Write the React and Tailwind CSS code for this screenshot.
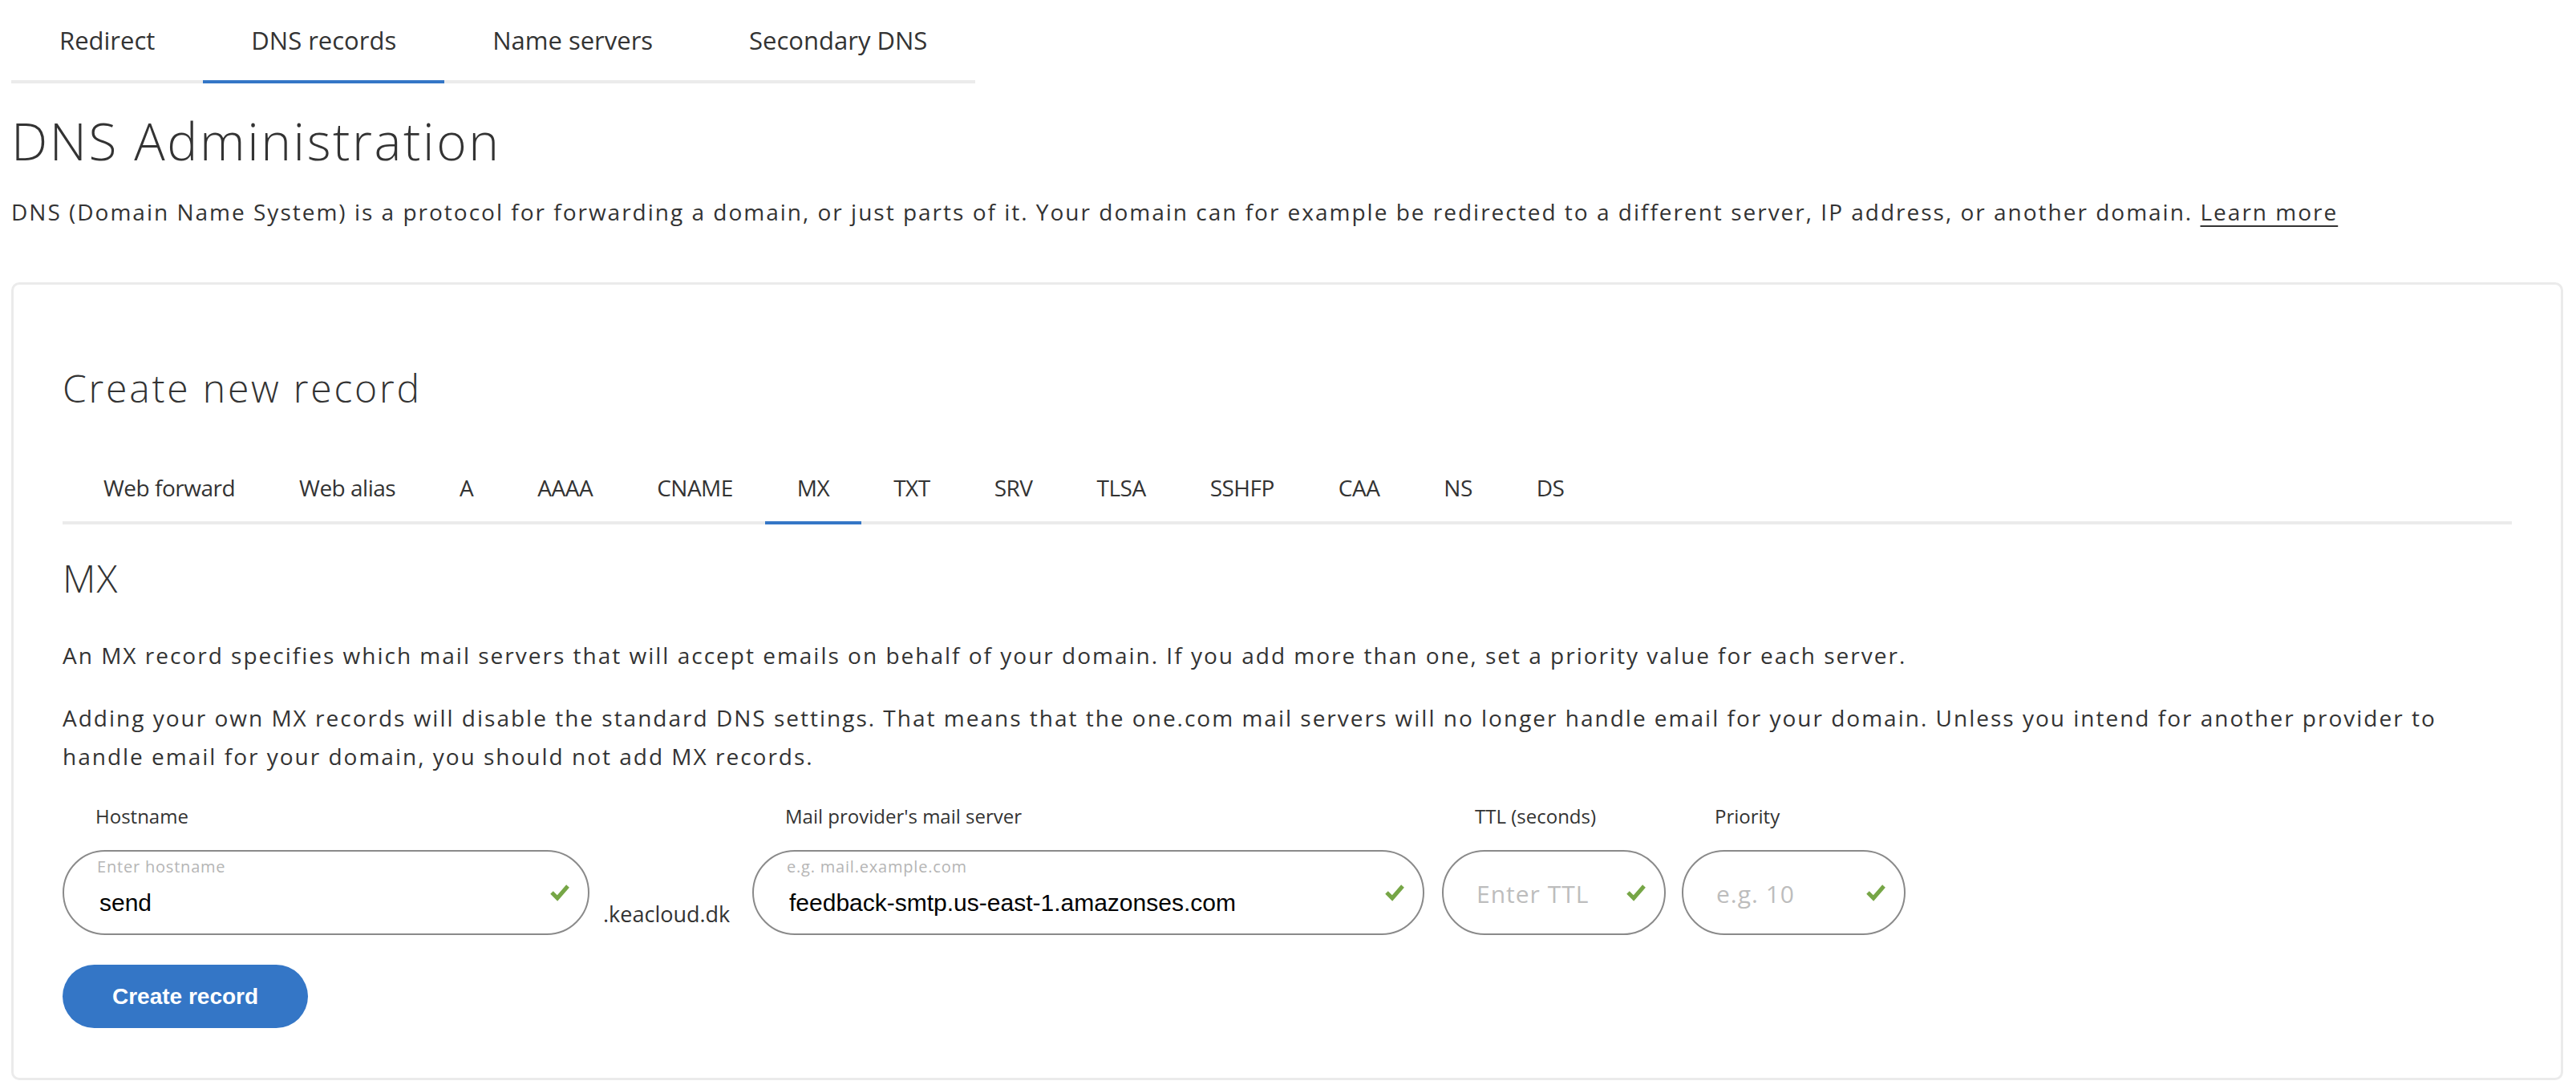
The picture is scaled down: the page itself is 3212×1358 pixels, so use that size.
import React from "react";

function Check() {
  return (
    <svg width="26" height="22" viewBox="0 0 26 22" className="shrink-0">
      <polyline points="3,11 10,18 23,3" fill="none" stroke="#76a646" strokeWidth="5" strokeLinecap="butt" strokeLinejoin="miter" />
    </svg>
  );
}

function Field({ label, width, small, value, placeholder }) {
  return (
    <div className="flex flex-col shrink-0" style={{ width }}>
      <div className="pl-[41px] text-[24px] leading-[32px] text-[#333] font-['Open_Sans',sans-serif]">{label}</div>
      <div className="mt-[26px] h-[106px] rounded-full border-2 border-[#8a8a8a] bg-white flex items-center pr-[22px]">
        {value ? (
          <div className="flex-1 flex flex-col self-stretch pt-[5px] pl-[41px]">
            <div className="text-[20px] leading-[28px] tracking-[0.8px] text-[#b5b5b5] font-['Open_Sans',sans-serif]">{small}</div>
            <div className="mt-[14px] pl-[3px] text-[30px] leading-[34px] text-black font-['Liberation_Sans',Arial,sans-serif]">{value}</div>
          </div>
        ) : (
          <div className="flex-1 pl-[41px] pt-[4px] text-[30px] leading-[40px] tracking-[1px] text-[#bdbdbd] font-['Open_Sans',sans-serif]">{placeholder}</div>
        )}
        <Check />
      </div>
    </div>
  );
}

export default function App() {
  const topTabs = ["Redirect", "DNS records", "Name servers", "Secondary DNS"];
  const subTabs = ["Web forward", "Web alias", "A", "AAAA", "CNAME", "MX", "TXT", "SRV", "TLSA", "SSHFP", "CAA", "NS", "DS"];
  return (
    <div className="w-[3212px] min-h-[1358px] bg-white pl-[14px] pr-[16px] font-['Open_Sans',sans-serif] text-[#333]">
      <div className="flex">
        {topTabs.map((t) => (
          <div
            key={t}
            className={
              "px-[60px] pt-[28px] pb-[28px] text-[31px] leading-[44px] border-b-4 " +
              (t === "DNS records" ? "border-[#3476c6]" : "border-[#ebebeb]")
            }
          >
            {t}
          </div>
        ))}
      </div>
      <h1 className="mt-[33px] text-[64px] leading-[77px] font-light tracking-[2.6px] text-[#333]">DNS Administration</h1>
      <p className="mt-[26px] text-[28px] leading-[48px] tracking-[2px]">
        DNS (Domain Name System) is a protocol for forwarding a domain, or just parts of it. Your domain can for example be redirected to a different server, IP address, or another domain.{" "}
        <span className="underline underline-offset-[6px] decoration-2">Learn more</span>
      </p>

      <div className="mt-[64px] border-[3px] border-[#ebebeb] rounded-[10px] pt-[100px] pb-[62px] px-[61px]">
        <h2 className="text-[48px] leading-[58px] font-light tracking-[2.8px]">Create new record</h2>
        <div className="mt-[53px] flex border-b-4 border-[#ebebeb] pl-[11px]">
          {subTabs.map((t) => (
            <div
              key={t}
              className={
                "-mb-[4px] px-[40px] py-[22px] text-[28px] leading-[40px] tracking-[-0.5px] border-b-4 " +
                (t === "MX" ? "border-[#3476c6]" : "border-transparent")
              }
            >
              {t}
            </div>
          ))}
        </div>
        <h3 className="mt-[40px] text-[48px] leading-[54px] font-light tracking-[1px]">MX</h3>
        <p className="mt-[45px] text-[28px] leading-[48px] tracking-[2px]">
          An MX record specifies which mail servers that will accept emails on behalf of your domain. If you add more than one, set a priority value for each server.
        </p>
        <p className="mt-[30px] text-[28px] leading-[48px] tracking-[2px]">
          Adding your own MX records will disable the standard DNS settings. That means that the one.com mail servers will no longer handle email for your domain. Unless you intend for another provider to handle email for your domain, you should not add MX records.
        </p>

        <div className="mt-[35px] flex items-start">
          <Field label="Hostname" width={657} small="Enter hostname" value="send" />
          <div className="ml-[17px] mr-[22px] w-[164px] shrink-0 mt-[118px] text-[27px] leading-[40px] text-[#333]">.keacloud.dk</div>
          <Field label="Mail provider's mail server" width={838} small="e.g. mail.example.com" value="feedback-smtp.us-east-1.amazonses.com" />
          <div className="ml-[22px]">
            <Field label="TTL (seconds)" width={279} placeholder="Enter TTL" />
          </div>
          <div className="ml-[20px]">
            <Field label="Priority" width={279} placeholder="e.g. 10" />
          </div>
        </div>

        <button className="mt-[37px] h-[79px] px-[62px] rounded-full bg-[#3476c6] text-white text-[28px] font-bold font-['Liberation_Sans',Arial,sans-serif]">
          Create record
        </button>
      </div>
    </div>
  );
}
